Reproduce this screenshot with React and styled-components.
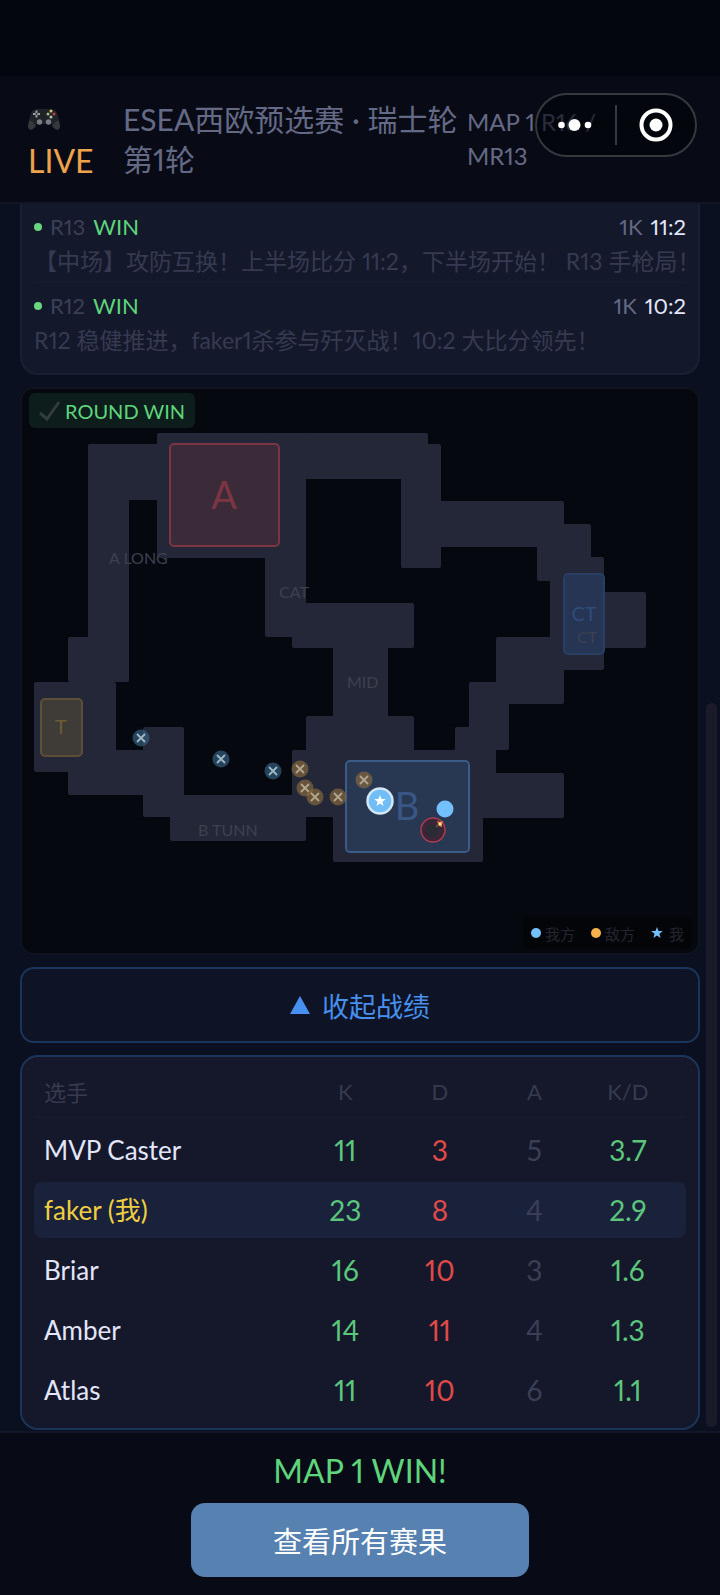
import React, { useState } from 'react';
import styled, { createGlobalStyle } from 'styled-components';

const GlobalStyle = createGlobalStyle`
    * {
        box-sizing: border-box;
    }

    body {
        margin: 0;
        background: #0b1020;
        color: #e3e6fa;
        font-family: Lato, "Noto Sans CJK SC", sans-serif;
        font-variant-numeric: proportional-nums;
    }

    button {
        font-family: inherit;
        cursor: pointer;
    }
`;

const Page = styled.div`
    min-height: 100vh;
    display: flex;
    flex-direction: column;
    background: #0b1020;
`;

const StatusBar = styled.div`
    height: 76px;
    background: #03060e;
`;

const Header = styled.header`
    position: relative;
    display: flex;
    align-items: center;
    padding: 20px 101px 20px 28px;
    background: #080b16;
    border-bottom: 2px solid #111627;
`;

const Live = styled.div`
    flex: 0 0 95px;
    display: flex;
    flex-direction: column;
    padding-top: 2px;
    font-size: 32px;
    line-height: 42px;
    color: #eda24b;

    svg {
        width: 32px;
        height: 42px;
    }
`;

const Title = styled.h1`
    flex: 1;
    margin: 0;
    font-size: 30px;
    font-weight: 400;
    line-height: 40px;
    color: #646985;
`;

const MapInfo = styled.div`
    flex: 0 0 152px;
    font-size: 24px;
    line-height: 34px;
    color: #646985;
`;

const Capsule = styled.div`
    position: absolute;
    top: 17px;
    right: 23px;
    width: 162px;
    height: 64px;
    display: flex;
    align-items: center;
    border: 2px solid #36383f;
    border-radius: 32px;
    background: rgba(2, 4, 10, 0.6);
`;

const CapsuleButton = styled.button`
    flex: 1;
    height: 40px;
    display: flex;
    align-items: center;
    justify-content: center;
    padding: 0;
    border: 0;
    border-left: ${props => (props.$divided ? '2px solid #36383f' : '0')};
    background: none;
`;

const Body = styled.main`
    position: relative;
    flex: 1;
    display: flex;
    flex-direction: column;
    gap: 12px;
    padding: 0 20px;
`;

const ScrollThumb = styled.div`
    position: absolute;
    right: 3px;
    bottom: 4px;
    width: 11px;
    height: 59%;
    border-radius: 6px;
    background: #191b28;
`;

const Feed = styled.section`
    padding: 0 12px 11px;
    border: 2px solid #1a2034;
    border-top: 0;
    border-radius: 0 0 18px 18px;
    background: #14182b;
`;

const FeedItem = styled.article`
    padding: 6px 0 4px;
    font-size: 22px;
    line-height: 34px;
    border-bottom: 1px solid ${props => (props.$last ? 'transparent' : '#191d30')};
`;

const FeedHead = styled.div`
    display: flex;
    align-items: center;
    gap: 8px;
`;

const FeedDot = styled.span`
    width: 8px;
    height: 8px;
    border-radius: 50%;
    background: #68d57f;
`;

const FeedRound = styled.span`
    color: #3b3f56;
`;

const FeedResult = styled.span`
    color: #5fd57b;
`;

const FeedKills = styled.span`
    margin-left: auto;
    color: #646985;
`;

const FeedScore = styled.span`
    color: #e3e6fa;
`;

const FeedText = styled.p`
    margin: 0;
    font-size: 23px;
    white-space: nowrap;
    color: #363a51;
`;

const MapCard = styled.section`
    position: relative;
    border: 2px solid #10131f;
    border-radius: 14px;
    background: #05080f;
    overflow: hidden;
`;

const MapSvg = styled.svg`
    display: block;
    width: 100%;
    height: auto;
`;

const RoundBadge = styled.div`
    position: absolute;
    top: 4px;
    left: 7px;
    display: flex;
    align-items: center;
    gap: 4px;
    height: 35px;
    padding: 0 10px;
    border-radius: 6px;
    background: #0c1d1b;
    font-size: 20px;
    color: #5fd57b;
`;

const Legend = styled.div`
    position: absolute;
    right: 6px;
    bottom: 4px;
    display: flex;
    align-items: center;
    gap: 16px;
    height: 32px;
    padding: 0 8px;
    border-radius: 6px;
    background: #030509;
    font-size: 15px;
    color: #232530;
`;

const LegendItem = styled.span`
    display: flex;
    align-items: center;
    gap: ${props => (props.$wide ? '6px' : '4px')};
`;

const LegendDot = styled.i`
    width: 10px;
    height: 10px;
    border-radius: 50%;
    background: ${props => props.$color};
`;

const ToggleButton = styled.button`
    display: flex;
    align-items: center;
    justify-content: center;
    gap: 12px;
    height: 76px;
    border: 2px solid #1b3459;
    border-radius: 14px;
    background: #0e1425;
    font-size: 27px;
    color: #4790f0;
`;

const ScoreCard = styled.section`
    padding: 12px 12px 6px;
    border: 2px solid #1b3459;
    border-radius: 18px;
    background: #14182a;
`;

const ScoreTable = styled.table`
    width: 100%;
    table-layout: fixed;
    border-collapse: separate;
    border-spacing: 0 4px;
`;

const HeadCell = styled.th`
    width: ${props => props.$width};
    height: 45px;
    padding: 0 0 8px;
    border-bottom: 1px solid #181c2e;
    font-size: 22px;
    font-weight: 400;
    text-align: center;
    color: #363a50;

    &:first-child {
        padding-left: 10px;
        text-align: left;
    }

    &:last-child {
        padding-right: 12px;
    }
`;

const PlayerRow = styled.tr`
    height: 56px;
    background: ${props => (props.$me ? '#19213b' : 'transparent')};

    th {
        color: ${props => (props.$me ? '#efcf42' : '#e3e6fa')};
    }
`;

const NameCell = styled.th`
    padding: 0 10px;
    border-radius: 8px 0 0 8px;
    font-size: 26px;
    font-weight: 400;
    line-height: 32px;
    text-align: left;
`;

const StatCell = styled.td`
    padding: 0;
    font-size: 28px;
    text-align: center;
    color: ${props => props.$color};

    &:last-child {
        padding-right: 12px;
        border-radius: 0 8px 8px 0;
    }
`;

const Footer = styled.footer`
    display: flex;
    flex-direction: column;
    align-items: center;
    gap: 12px;
    padding: 18px 20px;
    border-top: 2px solid #121626;
    background: #080b16;
`;

const ResultText = styled.div`
    font-size: 32px;
    line-height: 40px;
    color: #5fd57b;
`;

const ResultButton = styled.button`
    min-width: 338px;
    height: 74px;
    border: 0;
    border-radius: 14px;
    background: #5681b1;
    font-size: 29px;
    color: #ffffff;
`;

const ROUNDS = [
    { round: 'R13', kills: '1K', score: '11:2', text: '【中场】攻防互换！上半场比分 11:2，下半场开始！ R13 手枪局！' },
    { round: 'R12', kills: '1K', score: '10:2', text: 'R12 稳健推进，faker1杀参与歼灭战！10:2 大比分领先！' },
];

const COLUMNS = [
    { label: '选手', width: '40.5%' },
    { label: 'K', width: '14.5%' },
    { label: 'D', width: '14.5%' },
    { label: 'A', width: '14.5%' },
    { label: 'K/D', width: '16%' },
];

const PLAYERS = [
    { name: 'MVP Caster', k: 11, d: 3, a: 5, kd: '3.7' },
    { name: 'faker (我)', k: 23, d: 8, a: 4, kd: '2.9', me: true },
    { name: 'Briar', k: 16, d: 10, a: 3, kd: '1.6' },
    { name: 'Amber', k: 14, d: 11, a: 4, kd: '1.3' },
    { name: 'Atlas', k: 11, d: 10, a: 6, kd: '1.1' },
];

// x, y, width, height
const CORRIDORS = [
    [66, 55, 41, 238],
    [66, 55, 80, 56],
    [135, 44, 149, 125],
    [135, 44, 271, 46],
    [243, 44, 41, 204],
    [270, 214, 122, 45],
    [379, 55, 40, 124],
    [379, 112, 163, 46],
    [515, 135, 54, 57],
    [528, 168, 54, 113],
    [542, 203, 82, 56],
    [474, 248, 68, 67],
    [447, 293, 40, 68],
    [433, 338, 41, 90],
    [311, 214, 55, 160],
    [284, 327, 108, 60],
    [270, 361, 80, 67],
    [311, 361, 150, 112],
    [440, 384, 102, 45],
    [46, 248, 61, 45],
    [12, 293, 82, 90],
    [46, 361, 116, 45],
    [121, 338, 41, 90],
    [148, 406, 136, 46],
];

const LABELS = [
    { x: 87, y: 175, text: 'A LONG' },
    { x: 257, y: 209, text: 'CAT' },
    { x: 325, y: 299, text: 'MID' },
    { x: 176, y: 447, text: 'B TUNN' },
    { x: 555, y: 254, text: 'CT' },
];

const DEATHS = [
    { x: 119, y: 349, side: 'us' },
    { x: 199, y: 370, side: 'us' },
    { x: 251, y: 382, side: 'us' },
    { x: 278, y: 380, side: 'them' },
    { x: 283, y: 399, side: 'them' },
    { x: 293, y: 408, side: 'them' },
    { x: 316, y: 408, side: 'them' },
    { x: 342, y: 391, side: 'them' },
];

const STAR = 'M0 -6 L1.5 -1.9 L5.8 -1.9 L2.4 0.8 L3.6 5 L0 2.5 L-3.6 5 L-2.4 0.8 L-5.8 -1.9 L-1.5 -1.9 Z';

function Gamepad() {
    return (
        <svg viewBox="0 0 32 42" aria-hidden="true">
            <path d="M4 13 Q9 10 16 11 Q23 10 28 13 Q31 19 32 29 Q31 33 27 31 L23 26 H9 L5 31 Q1 33 0 29 Q1 19 4 13Z" fill="#1f2226" />
            <path d="M1 23 Q4 22 6 26 L8 28 L5 31 Q1 33 0 29Z M31 23 Q28 22 26 26 L24 28 L27 31 Q31 33 32 29Z" fill="#36383d" />
            <path d="M8.500 12.500v7M5 16h7" stroke="#9a9da2" strokeWidth="2" />
            <circle cx="8.500" cy="16" r="1" fill="#24272b" />
            <circle cx="11.500" cy="24" r="2.700" fill="#777c83" />
            <circle cx="20.500" cy="24" r="2.700" fill="#777c83" />
            <circle cx="23" cy="13" r="1.500" fill="#d9c36c" />
            <circle cx="20" cy="16" r="1.500" fill="#a7b98c" />
            <circle cx="26" cy="16" r="1.500" fill="#b9483c" />
            <circle cx="23" cy="19" r="1.500" fill="#b7c7a0" />
        </svg>
    );
}

function TacticalMap() {
    return (
        <MapSvg viewBox="0 0 676 564" role="img" aria-label="MAP 1">
            <g fill="#232737">
                {CORRIDORS.map(([x, y, w, h], i) => (
                    <rect key={i} x={x} y={y} width={w} height={h} rx="2" />
                ))}
            </g>
            <g strokeWidth="2">
                <rect x="148" y="55" width="109" height="102" rx="4" fill="#3b2a37" stroke="#7c3542" />
                <rect x="324" y="372" width="123" height="91" rx="4" fill="#283752" stroke="#3c5c88" />
                <rect x="542" y="185" width="40" height="80" rx="4" fill="#263553" stroke="#283e62" />
                <rect x="19" y="310" width="41" height="57" rx="4" fill="#3f3b36" stroke="#5b4f37" />
            </g>
            <g textAnchor="middle">
                <text x="202" y="120" fontSize="38" fill="#7c3542">A</text>
                <text x="385" y="431" fontSize="38" fill="#3a5684">B</text>
                <text x="562" y="232" fontSize="20" fill="#304d7a">CT</text>
                <text x="39" y="345" fontSize="20" fill="#6b5c35">T</text>
            </g>
            <g fontSize="16" fill="#3d414f">
                {LABELS.map(label => (
                    <text key={label.text} x={label.x} y={label.y}>{label.text}</text>
                ))}
            </g>
            {DEATHS.map(({ x, y, side }) => (
                <g key={`${x}-${y}`} transform={`translate(${x} ${y})`}>
                    <circle r="8.500" fill={side === 'us' ? '#386482' : '#8a6b3e'} fillOpacity="0.650" />
                    <path d="M-4 -4 L4 4 M4 -4 L-4 4" stroke={side === 'us' ? '#9fb8c8' : '#b3a68e'} strokeWidth="1.800" />
                </g>
            ))}
            <g transform="translate(358 412)">
                <circle r="12.500" fill="#70bdf8" stroke="#d5e6f4" strokeWidth="2.500" />
                <path d={STAR} fill="#ffffff" />
            </g>
            <circle cx="423" cy="420" r="8.500" fill="#73c0fc" />
            <g transform="translate(411 441)">
                <circle r="12" fill="#3b2537" stroke="#ad3c50" strokeWidth="1.500" />
                <circle cx="-1" cy="1" r="6.500" fill="#2a2c35" />
                <path d="M3 -3 L6 -6" stroke="#6a5a4a" strokeWidth="1.500" />
                <path d="M4 -9 L7 -8 L10 -9 L9 -6 L9 -3 L6 -4Z" fill="#f0904a" />
                <circle cx="7" cy="-6" r="1.200" fill="#fff0c0" />
            </g>
        </MapSvg>
    );
}

function Scoreboard() {
    return (
        <ScoreCard>
            <ScoreTable>
                <thead>
                    <tr>
                        {COLUMNS.map(column => (
                            <HeadCell key={column.label} scope="col" $width={column.width}>
                                {column.label}
                            </HeadCell>
                        ))}
                    </tr>
                </thead>
                <tbody>
                    {PLAYERS.map(player => (
                        <PlayerRow key={player.name} $me={player.me}>
                            <NameCell scope="row">{player.name}</NameCell>
                            <StatCell $color="#5bc67c">{player.k}</StatCell>
                            <StatCell $color="#e04a49">{player.d}</StatCell>
                            <StatCell $color="#3b3f56">{player.a}</StatCell>
                            <StatCell $color="#5bc67c">{player.kd}</StatCell>
                        </PlayerRow>
                    ))}
                </tbody>
            </ScoreTable>
        </ScoreCard>
    );
}

function App() {
    const [open, setOpen] = useState(true);

    return (
        <Page>
            <GlobalStyle />
            <StatusBar />
            <Header>
                <Live>
                    <Gamepad />
                    LIVE
                </Live>
                <Title>ESEA西欧预选赛 · 瑞士轮第1轮</Title>
                <MapInfo>MAP 1 R16 / MR13</MapInfo>
                <Capsule>
                    <CapsuleButton aria-label="更多">
                        <svg width="36" height="14" viewBox="0 0 36 14" fill="#ffffff">
                            <circle cx="3.500" cy="7" r="3.300" />
                            <circle cx="16.500" cy="7" r="6" />
                            <circle cx="30" cy="7" r="3.300" />
                        </svg>
                    </CapsuleButton>
                    <CapsuleButton aria-label="关闭" $divided>
                        <svg width="34" height="34" viewBox="0 0 34 34">
                            <circle cx="17" cy="17" r="14.500" fill="none" stroke="#ffffff" strokeWidth="4" />
                            <circle cx="17" cy="17" r="6.500" fill="#ffffff" />
                        </svg>
                    </CapsuleButton>
                </Capsule>
            </Header>
            <Body>
                <Feed>
                    {ROUNDS.map((item, i) => (
                        <FeedItem key={item.round} $last={i === ROUNDS.length - 1}>
                            <FeedHead>
                                <FeedDot />
                                <FeedRound>{item.round}</FeedRound>
                                <FeedResult>WIN</FeedResult>
                                <FeedKills>{item.kills}</FeedKills>
                                <FeedScore>{item.score}</FeedScore>
                            </FeedHead>
                            <FeedText>{item.text}</FeedText>
                        </FeedItem>
                    ))}
                </Feed>
                <MapCard>
                    <TacticalMap />
                    <RoundBadge>
                        <svg width="22" height="22" viewBox="0 0 22 22" fill="none" stroke="#333b3d" strokeWidth="3">
                            <path d="M1 13 L8 19 L20 2" />
                        </svg>
                        ROUND WIN
                    </RoundBadge>
                    <Legend>
                        <LegendItem><LegendDot $color="#73c0fc" />我方</LegendItem>
                        <LegendItem><LegendDot $color="#f5b24c" />敌方</LegendItem>
                        <LegendItem $wide>
                            <svg width="12" height="12" viewBox="-6 -6 12 12"><path d={STAR} fill="#73c0fc" /></svg>
                            我
                        </LegendItem>
                    </Legend>
                </MapCard>
                <ToggleButton aria-expanded={open} onClick={() => setOpen(!open)}>
                    <svg width="20" height="18" viewBox="0 0 20 18">
                        <path d={open ? 'M10 0 L20 18 H0Z' : 'M10 18 L20 0 H0Z'} fill="#4790f0" />
                    </svg>
                    {open ? '收起战绩' : '展开战绩'}
                </ToggleButton>
                {open && <Scoreboard />}
                <ScrollThumb />
            </Body>
            <Footer>
                <ResultText>MAP 1 WIN!</ResultText>
                <ResultButton>查看所有赛果</ResultButton>
            </Footer>
        </Page>
    );
}

export default App;
